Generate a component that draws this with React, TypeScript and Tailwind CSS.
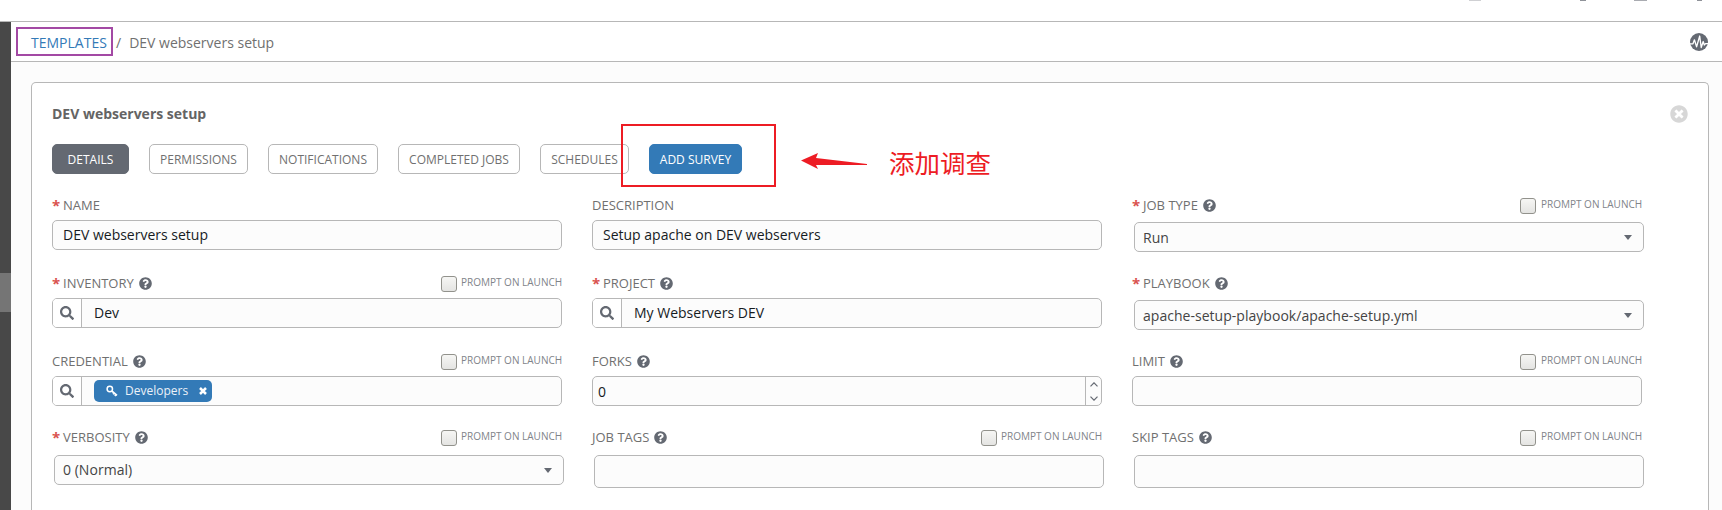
import type { ReactNode } from "react";
import { FaQuestionCircle, FaSearch, FaTimesCircle } from "react-icons/fa";

function Prompt({ gap }: { gap: string }) {
  return (
    <div className={`flex h-[18px] text-[11px] leading-4 text-[#7f848a] ${gap}`}>
      <span className="mt-[2px] h-4 w-4 rounded-[3px] border border-[#92928c] bg-linear-to-b from-[#f6f6f4] to-[#e4e4e2]" />
      <span className="w-[101px] origin-left scale-x-[0.91] whitespace-nowrap">PROMPT ON LAUNCH</span>
    </div>
  );
}

type FieldProps = {
  label: string;
  required?: boolean;
  help?: boolean;
  prompt?: boolean;
  promptGap?: string;
  children: ReactNode;
};

function Field({ label, required, help, prompt, promptGap = "gap-[4px]", children }: FieldProps) {
  return (
    <div className="flex flex-col">
      <div className="flex h-6 items-start justify-between">
        <div className="flex h-[18px] items-center text-[13px] leading-[18px] text-[#707070]">
          {required && <span className="mr-[5px] w-[6px] text-[15px] leading-[18px] font-bold text-[#d9534f]">*</span>}
          <span className="whitespace-nowrap">{label}</span>
          {help && <FaQuestionCircle className="ml-[5px] h-[13px] w-[13px] text-[#646972]" />}
        </div>
        {prompt && <Prompt gap={promptGap} />}
      </div>
      {children}
    </div>
  );
}

function TextBox({ value }: { value?: string }) {
  return (
    <div className="flex h-[30px] items-center rounded-[5px] border border-[#b7b7b7] bg-[#fcfcfc] px-[10px] text-sm text-[#161b1f]">
      {value}
    </div>
  );
}

function Lookup({ children }: { children: ReactNode }) {
  return (
    <div className="flex h-[30px] items-stretch overflow-hidden rounded-[5px] border border-[#b7b7b7] bg-[#fcfcfc] text-sm text-[#161b1f]">
      <div className="flex w-[29px] items-center border-r border-[#b7b7b7] bg-white pl-[7px]">
        <FaSearch className="h-[14px] w-[14px] text-[#646972]" />
      </div>
      <div className="flex items-center pl-3">{children}</div>
    </div>
  );
}

function Select({ value, className = "" }: { value: string; className?: string }) {
  return (
    <div className="ml-[2px] flex h-[30px] w-[510px] items-center justify-between rounded-[5px] border border-[#b7b7b7] bg-[#fcfcfc] pr-[11px] pl-2 text-sm text-[#444]">
      <span className={`tracking-[0.03px] ${className}`}>{value}</span>
      <svg width="8" height="5" viewBox="0 0 8 5" className="fill-[#646972]">
        <path d="M0 0h8L4 5z" />
      </svg>
    </div>
  );
}

function TagBox() {
  return <div className="ml-[2px] h-[33px] w-[510px] rounded-[5px] border border-[#b7b7b7] bg-[#fcfcfc]" />;
}

function Tab({ label, className }: { label: string; className: string }) {
  return (
    <div className={`flex h-[30px] items-center justify-center rounded-[5px] border pt-[2px] text-xs whitespace-nowrap ${className}`}>
      {label}
    </div>
  );
}

const plain = "border-[#b7b7b7] bg-white text-[#707070]";

export default function App() {
  return (
    <div className="relative flex h-[510px] w-[1722px] flex-col overflow-hidden bg-[#fcfcfc] font-['Open_Sans','Noto_Sans_CJK_SC',sans-serif]">
      <header className="flex h-[22px] shrink-0 items-start justify-end border-b border-[#b7b7b7] bg-white pr-[20px]">
        <div className="mr-[99px] h-px w-3 bg-[#cfd0d3]" />
        <div className="mr-[48px] h-px w-[6px] bg-[#8f9299]" />
        <div className="mr-[50px] h-px w-[13px] bg-[#a9abb1]" />
        <div className="h-px w-[5px] bg-[#8f9299]" />
      </header>
      <div className="flex min-h-0 flex-1">
        <aside className="w-[11px] bg-[#484848] pt-[251px]">
          <div className="h-[39px] bg-[#757575]" />
        </aside>
        <div className="flex min-w-0 flex-1 flex-col">
          <nav className="flex h-10 shrink-0 items-center border-b border-[#b7b7b7] bg-white pl-[5px] text-sm text-[#707070]">
            <div className="flex h-[29px] w-[97px] items-center border-2 border-[#a349a4] pt-[2px] pl-[13px] text-[#337ab7]">TEMPLATES</div>
            <span className="ml-[3px] pt-[2px]">/</span>
            <span className="ml-[8px] pt-[2px]">DEV webservers setup</span>
            <svg viewBox="0 0 18 18" className="mr-[14px] ml-auto h-[18px] w-[18px]">
              <circle cx="9" cy="9" r="9" fill="#646972" />
              <path d="M0 10.800h3l1.400-4 2.200 7L9.700 3l1.500 11.500 2-6 1.100 3.500 1.200-1.400H18" fill="none" stroke="#fff" strokeWidth="1.3" strokeLinejoin="round" />
            </svg>
          </nav>
          <main className="flex flex-1 pt-5 pl-5">
            <section className="flex w-[1678px] flex-col rounded-t-[5px] border border-b-0 border-[#b7b7b7] bg-white pl-5">
              <div className="mt-[20px] flex h-[22px] items-center justify-between pr-5">
                <h1 className="text-sm font-bold text-[#646464]">DEV webservers setup</h1>
                <FaTimesCircle className="h-[18px] w-[18px] text-[#d7d7d7]" />
              </div>
              <div className="mt-[19px] flex gap-5">
                <Tab label="DETAILS" className="w-[77px] border-[#646972] bg-[#646972] text-white" />
                <Tab label="PERMISSIONS" className={`w-[99px] ${plain}`} />
                <Tab label="NOTIFICATIONS" className={`w-[110px] ${plain}`} />
                <Tab label="COMPLETED JOBS" className={`w-[122px] ${plain}`} />
                <Tab label="SCHEDULES" className={`w-[89px] ${plain}`} />
                <Tab label="ADD SURVEY" className="w-[93px] border-[#337ab7] bg-[#337ab7] text-white" />
              </div>
              <div className="mt-[22px] grid grid-cols-[510px_510px_510px] grid-rows-[78px_78px_76px_60px] gap-x-[30px]">
                <Field label="NAME" required><TextBox value="DEV webservers setup" /></Field>
                <Field label="DESCRIPTION"><TextBox value="Setup apache on DEV webservers" /></Field>
                <Field label="JOB TYPE" required help prompt promptGap="gap-[5px]"><div className="mt-[2px]"><Select value="Run" className="pt-[2px]" /></div></Field>
                <Field label="INVENTORY" required help prompt><Lookup>Dev</Lookup></Field>
                <Field label="PROJECT" required help><Lookup>My Webservers DEV</Lookup></Field>
                <Field label="PLAYBOOK" required help><div className="mt-[2px]"><Select value="apache-setup-playbook/apache-setup.yml" className="pt-[2px]" /></div></Field>
                <Field label="CREDENTIAL" help prompt>
                  <Lookup>
                    <div className="flex h-[22px] w-[118px] items-center rounded-[5px] bg-[#337ab7] pl-3 text-xs text-[#ebf1f8]">
                      <svg viewBox="0 0 12 12" className="h-3 w-3 fill-none stroke-white">
                        <circle cx="3.800" cy="4" r="2.700" strokeWidth="1.500" />
                        <path d="M5.800 6 11 10.300M10 9.500 8.900 11M8 8 7 9.300" strokeWidth="1.700" />
                      </svg>
                      <span className="ml-[7px] w-[63px]">Developers</span>
                      <svg viewBox="0 0 8 8" className="ml-[11px] h-2 w-2 fill-none stroke-white">
                        <path d="M1 1l6 6M7 1 1 7" strokeWidth="2.500" />
                      </svg>
                    </div>
                  </Lookup>
                </Field>
                <Field label="FORKS" help>
                  <div className="flex h-[30px] justify-between rounded-[5px] border border-[#b7b7b7] bg-[#fcfcfc] pl-[5px] text-sm text-[#161b1f]">
                    <span className="leading-[30px]">0</span>
                    <div className="flex w-[16px] flex-col items-center justify-center gap-[9px] border-l border-[#b7b7b7]">
                      <svg width="8" height="5" viewBox="0 0 8 5" className="fill-none stroke-[#646972]"><path d="M.5 4.300 4 .8l3.500 3.500" strokeWidth="1.200" /></svg>
                      <svg width="8" height="5" viewBox="0 0 8 5" className="fill-none stroke-[#646972]"><path d="M.5.7 4 4.200 7.500.7" strokeWidth="1.200" /></svg>
                    </div>
                  </div>
                </Field>
                <Field label="LIMIT" help prompt promptGap="gap-[5px]"><TextBox /></Field>
                <Field label="VERBOSITY" required help prompt><div className="mt-[3px]"><Select value="0 (Normal)" /></div></Field>
                <Field label="JOB TAGS" help prompt><div className="mt-[3px]"><TagBox /></div></Field>
                <Field label="SKIP TAGS" help prompt promptGap="gap-[5px]"><div className="mt-[3px]"><TagBox /></div></Field>
              </div>
            </section>
          </main>
        </div>
      </div>
      <div className="absolute top-[124px] left-[621px] h-[63px] w-[155px] border-2 border-[#ed1c24]" />
      <svg viewBox="0 0 66 16" className="absolute top-[153px] left-[801px] h-4 w-[66px] fill-[#ed1c24]">
        <path d="M0 7.500 17 0l-2 5 51 6v1H15l2 4z" />
      </svg>
      <div className="absolute top-[143px] left-[889px] font-['Noto_Sans_CJK_SC',sans-serif] text-[25.5px] leading-[37px] text-[#ed1c24]">添加调查</div>
    </div>
  );
}
